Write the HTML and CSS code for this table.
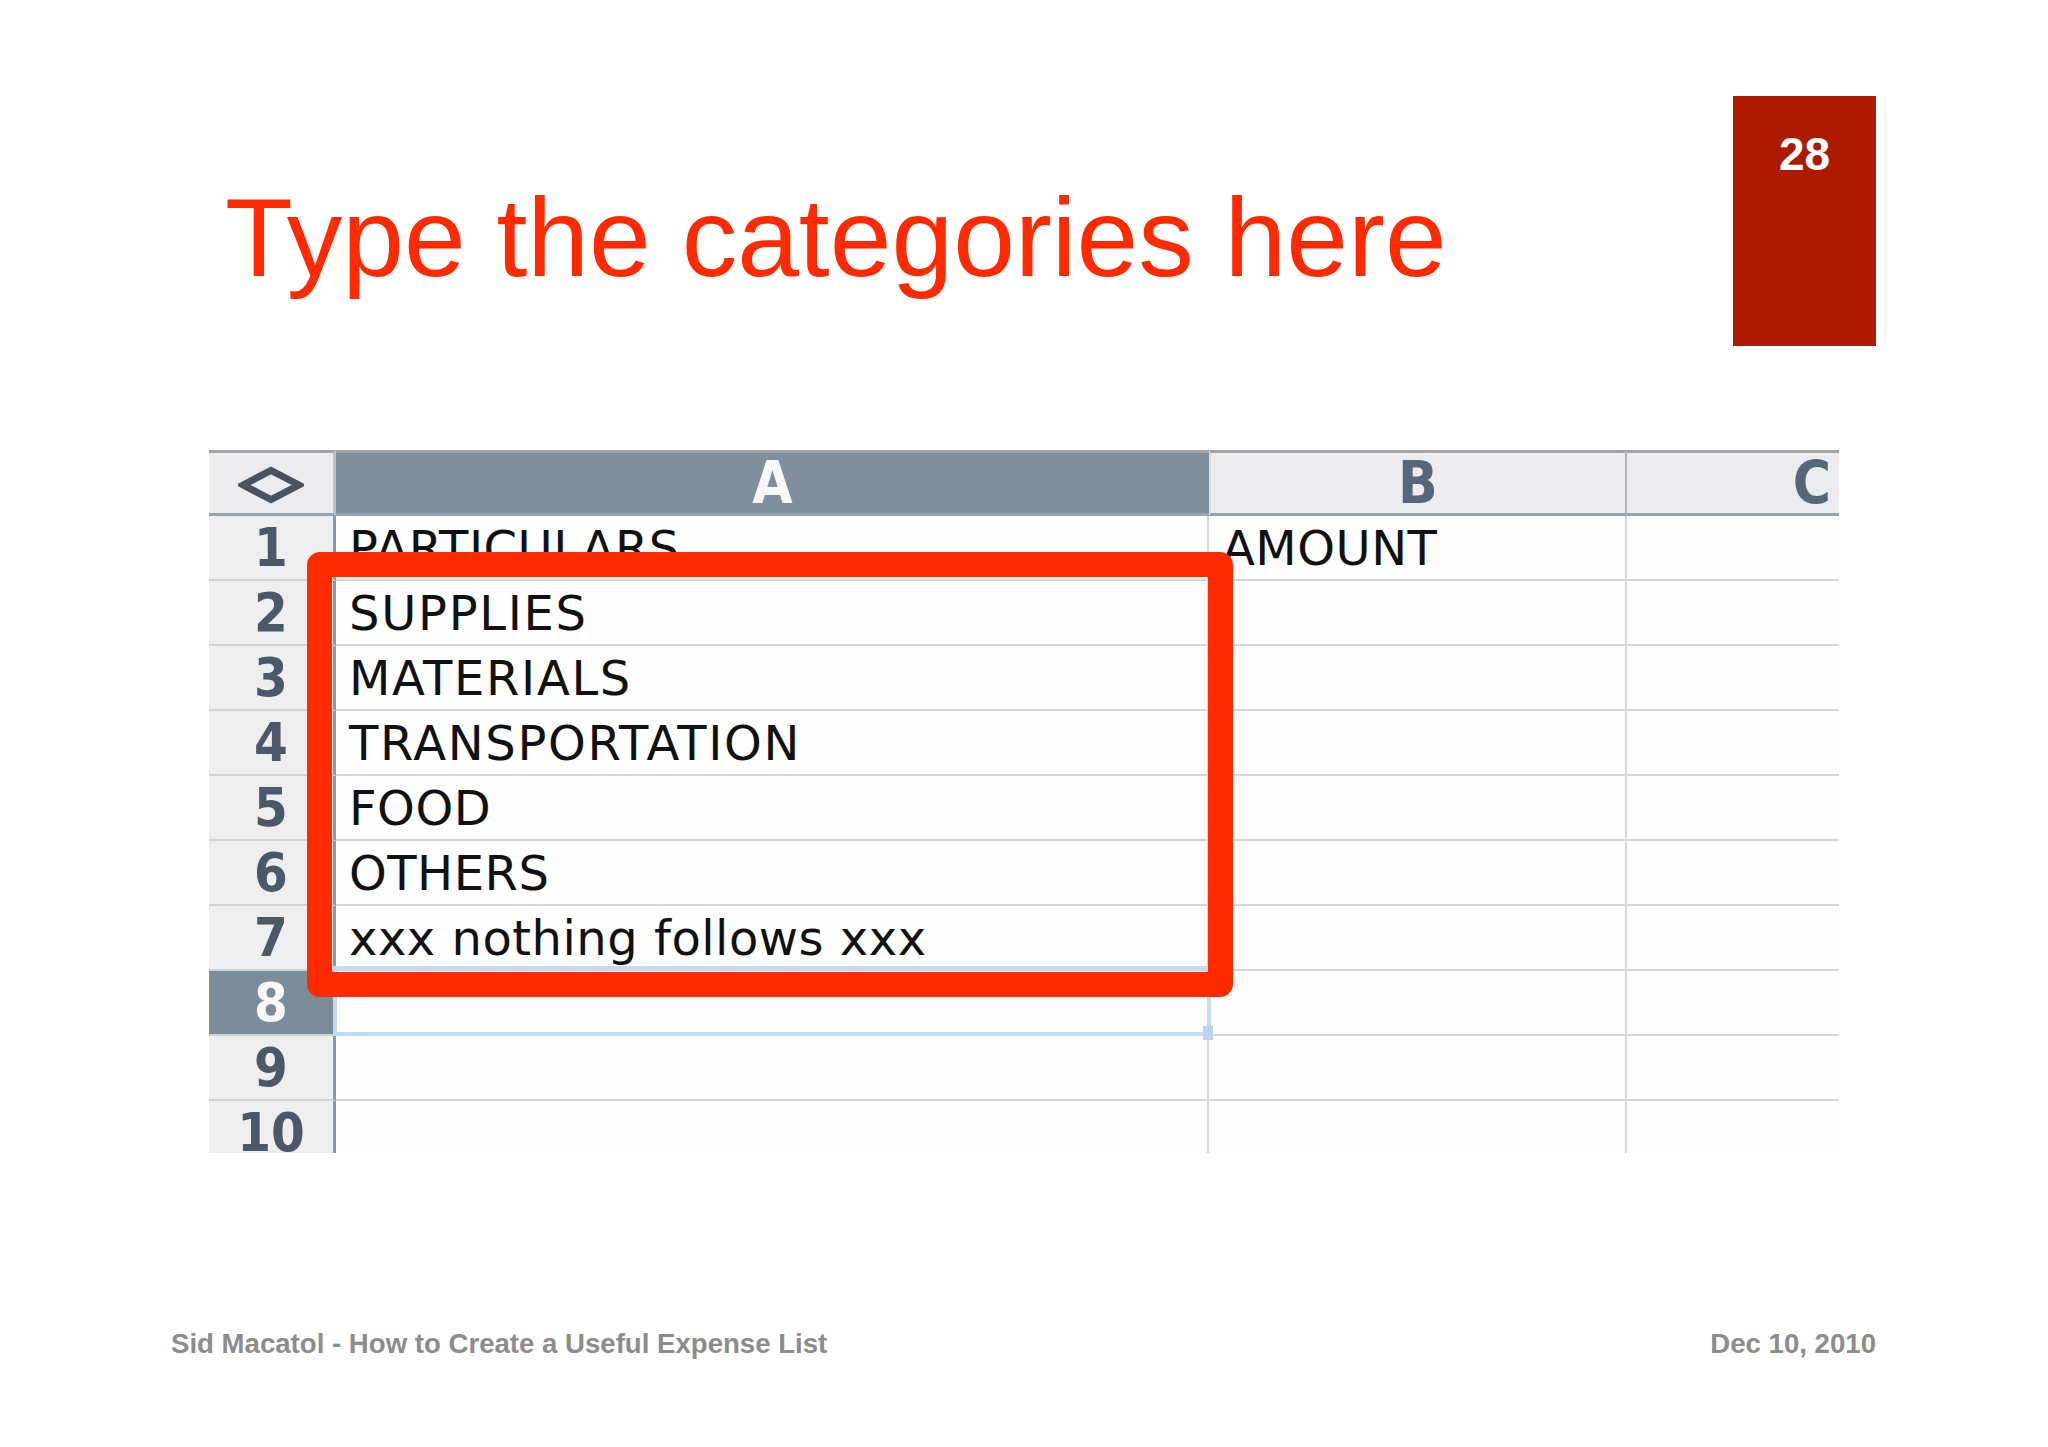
FILE: index.html
```html
<!DOCTYPE html>
<html>
<head>
<meta charset="utf-8">
<title>Type the categories here</title>
<link rel="stylesheet" href="styles.css">
</head>
<body>
<div class="slide">
  <header class="top">
    <h1 class="title">Type the categories here</h1>
    <div class="pagebox"><span class="pagenum">28</span></div>
  </header>

  <div class="sheet">
    <div class="grid">
      <div class="corner">
        <svg class="diamond" width="66" height="38" viewBox="0 0 66 38"><polygon points="5,19 33,4.5 61,19 33,33.5" fill="none" stroke="#4a525e" stroke-width="7" stroke-linejoin="miter"/></svg>
      </div>
      <div class="colhead colsel">A</div>
      <div class="colhead colb">B</div>
      <div class="colhead colc">C</div>

      <div class="rowhead">1</div><div class="cell">PARTICULARS</div><div class="cell">AMOUNT</div><div class="cell lastcol"></div>
      <div class="rowhead">2</div><div class="cell wide">SUPPLIES</div><div class="cell"></div><div class="cell lastcol"></div>
      <div class="rowhead">3</div><div class="cell wide">MATERIALS</div><div class="cell"></div><div class="cell lastcol"></div>
      <div class="rowhead">4</div><div class="cell wide">TRANSPORTATION</div><div class="cell"></div><div class="cell lastcol"></div>
      <div class="rowhead">5</div><div class="cell">FOOD</div><div class="cell"></div><div class="cell lastcol"></div>
      <div class="rowhead">6</div><div class="cell">OTHERS</div><div class="cell"></div><div class="cell lastcol"></div>
      <div class="rowhead">7</div><div class="cell">xxx nothing follows xxx</div><div class="cell"></div><div class="cell lastcol"></div>
      <div class="rowhead rowsel">8</div><div class="cell selected"></div><div class="cell"></div><div class="cell lastcol"></div>
      <div class="rowhead">9</div><div class="cell"></div><div class="cell"></div><div class="cell lastcol"></div>
      <div class="rowhead lastrow">10</div><div class="cell lastrow"></div><div class="cell lastrow"></div><div class="cell lastcol lastrow"></div>
    </div>
    <div class="highlight"></div>
  </div>

  <footer class="foot">
    <span>Sid Macatol - How to Create a Useful Expense List</span>
    <span>Dec 10, 2010</span>
  </footer>
</div>
</body>
</html>
```

FILE: styles.css
```css
* {
  box-sizing: border-box;
  margin: 0;
  padding: 0;
}

html,
body {
  width: 2048px;
  height: 1447px;
  background: #ffffff;
  overflow: hidden;
}

body {
  font-family: "Liberation Sans", Arial, sans-serif;
}

.slide {
  width: 2048px;
  height: 1447px;
  padding: 96px 172px 0 171px;
  display: flex;
  flex-direction: column;
  background: #ffffff;
}

/* ---------- header ---------- */
.top {
  display: flex;
  justify-content: space-between;
  align-items: flex-start;
  height: 250px;
}

.title {
  margin: 87px 0 0 54px;
  font-size: 111px;
  line-height: 111px;
  font-weight: normal;
  color: #ff2a00;
  white-space: nowrap;
}

.pagebox {
  width: 143px;
  height: 250px;
  background: #ad1a00;
  display: flex;
  justify-content: center;
  align-items: flex-start;
  padding-top: 35px;
}

.pagenum {
  font-size: 46px;
  line-height: 46px;
  font-weight: bold;
  color: #ffffff;
}

/* ---------- spreadsheet ---------- */
.sheet {
  position: relative;
  margin: 104px 0 0 38px;
  width: 1630px;
}

.grid {
  display: grid;
  grid-template-columns: 127px 873px 418px 212px;
  grid-template-rows: 66px repeat(9, 65px) 52px;
  background: #fefefe;
}

.corner,
.colhead {
  border-top: 3px solid #a4a4a6;
  border-bottom: 3px solid #97a4b0;
  display: flex;
  align-items: center;
  justify-content: center;
}

.corner {
  background: #ececee;
  border-right: 3px solid #b9c1c9;
}

.diamond {
  display: block;
  margin-top: 3px;
}

.colhead {
  font-family: "DejaVu Sans Condensed", "DejaVu Sans", sans-serif;
  font-stretch: condensed;
  font-weight: bold;
  font-size: 58px;
  line-height: 60px;
  color: #56677a;
  background: #ececee;
}

.colsel {
  background: #7f8f9e;
  color: #f6f8fa;
}

.colb {
  border-right: 2px solid #aeb8c2;
  border-left: 2px solid #d9dde2;
}

.colc {
  justify-content: flex-end;
  padding-right: 8px;
}

.rowhead {
  font-family: "DejaVu Sans Condensed", "DejaVu Sans", sans-serif;
  font-stretch: condensed;
  font-weight: bold;
  font-size: 54px;
  line-height: 63px;
  color: #4b5867;
  background: #eeeeef;
  border-right: 3px solid #8b99a7;
  border-bottom: 2px solid #cdd2d7;
  text-align: center;
  overflow: hidden;
}

.rowsel {
  background: #7b8c9a;
  color: #f6f8fa;
}

.cell {
  font-family: "DejaVu Sans", Verdana, sans-serif;
  font-size: 48px;
  line-height: 61px;
  letter-spacing: 0.5px;
  color: #111111;
  background: #fefefe;
  border-right: 2px solid #d6d6d9;
  border-bottom: 2px solid #d6d6d9;
  padding: 2px 0 0 13px;
  white-space: nowrap;
  overflow: hidden;
}

.wide {
  letter-spacing: 1.7px;
}

.lastcol {
  border-right: none;
}

.lastrow {
  border-bottom: none;
}

.selected {
  position: relative;
  overflow: visible;
}

.selected::after {
  content: "";
  position: absolute;
  left: -3px;
  right: -4px;
  top: -5px;
  bottom: -2px;
  border: 4px solid #c6daf3;
}

.selected::before {
  content: "";
  position: absolute;
  right: -6px;
  bottom: -6px;
  width: 10px;
  height: 14px;
  background: #bcd3f0;
  z-index: 1;
}

/* red annotation rectangle lying over the sheet */
.highlight {
  position: absolute;
  left: 98px;
  top: 102px;
  width: 926px;
  height: 445px;
  border: 25px solid #ff2a00;
  border-radius: 13px;
  z-index: 2;
}

/* ---------- footer ---------- */
.foot {
  margin-top: 177px;
  display: flex;
  justify-content: space-between;
  font-size: 27.6px;
  line-height: 28px;
  font-weight: bold;
  color: #8c8c8c;
}
```
